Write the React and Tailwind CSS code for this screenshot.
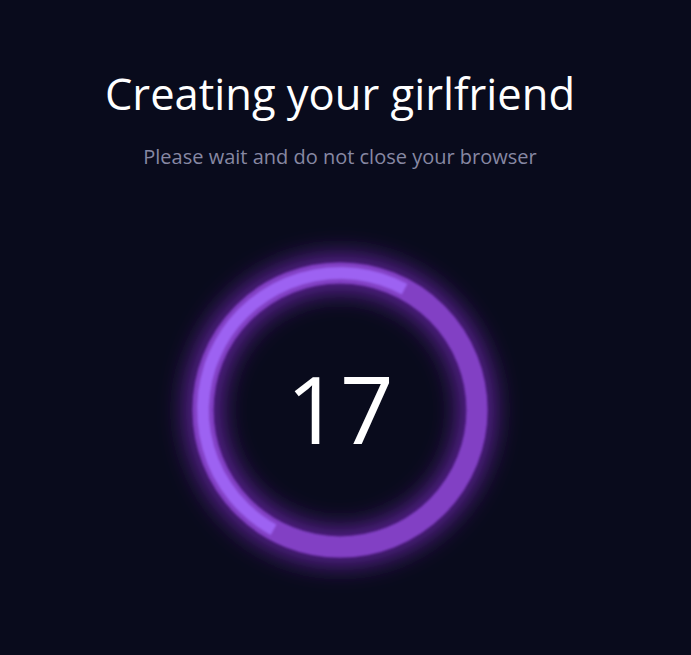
import React from "react";

// Countdown ring: a soft-glowing purple track with a brighter progress arc.
function ProgressRing({ value }) {
  const pad = 50;
  const size = 340 + pad * 2;
  const c = size / 2;
  const r = 137;
  const circ = 2 * Math.PI * r;
  const arc = circ * (179 / 360);
  return (
    <div className="relative w-[340px] h-[340px] flex items-center justify-center">
      <svg
        className="absolute -left-[50px] -top-[50px] pointer-events-none"
        width={size}
        height={size}
        viewBox={`0 0 ${size} ${size}`}
      >
        <defs>
          <filter id="glow" x="-40%" y="-40%" width="180%" height="180%">
            <feGaussianBlur stdDeviation="13" />
          </filter>
          <filter id="soft" x="-10%" y="-10%" width="120%" height="120%">
            <feGaussianBlur stdDeviation="1.3" />
          </filter>
        </defs>
        <circle
          cx={c}
          cy={c}
          r={r}
          fill="none"
          stroke="#8a2fd8"
          strokeOpacity="0.7"
          strokeWidth="34"
          filter="url(#glow)"
        />
        <circle
          cx={c}
          cy={c}
          r={r}
          fill="none"
          stroke="#8240c4"
          strokeWidth="21"
          filter="url(#soft)"
        />
        <circle
          cx={c}
          cy={c}
          r={r}
          fill="none"
          stroke="#9d62f2"
          strokeWidth="12"
          strokeDasharray={`${arc} ${circ}`}
          transform={`rotate(119 ${c} ${c})`}
          filter="url(#soft)"
        />
      </svg>
      <span className="relative text-white text-[94px] leading-none font-normal font-['Open_Sans',sans-serif] -mt-1">
        {value}
      </span>
    </div>
  );
}

export default function App() {
  return (
    <div className="w-full h-[655px] overflow-hidden bg-[#090b1c] flex flex-col items-center pr-[11px] font-['Open_Sans',sans-serif]">
      <h1 className="mt-[65px] text-[43.5px] leading-[58px] text-white font-normal">
        Creating your girlfriend
      </h1>
      <p className="mt-[20px] text-[20px] leading-[28px] text-[#8788a3]">
        Please wait and do not close your browser
      </p>
      <div className="mt-[69px]">
        <ProgressRing value={17} />
      </div>
    </div>
  );
}
